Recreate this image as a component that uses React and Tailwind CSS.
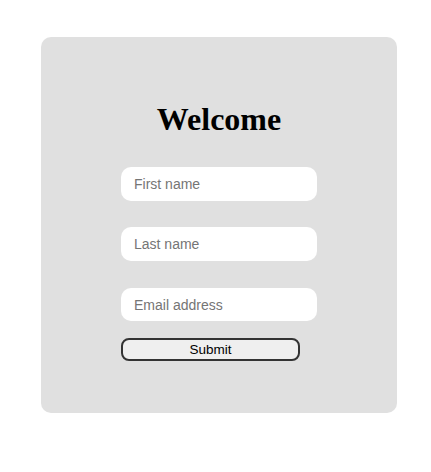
export default function App() {
  return (
    <div className="min-h-[472px] bg-white pt-[37px]">
      <div className="ml-[41px] w-[356px] h-[376px] rounded-[10px] bg-[#e0e0e0] flex flex-col items-center">
        <h1 className="mt-[64px] text-[32px] leading-[37px] font-bold text-black font-['Liberation_Serif',serif]">
          Welcome
        </h1>
        <form className="mt-[29px] flex flex-col items-start" onSubmit={e => e.preventDefault()}>
          <input
            placeholder="First name"
            className="w-[196px] h-[34px] rounded-[10px] bg-white px-[13px] text-[14px] font-['Liberation_Sans',sans-serif] placeholder:text-[#757575] outline-none"
          />
          <input
            placeholder="Last name"
            className="mt-[26px] w-[196px] h-[34px] rounded-[10px] bg-white px-[13px] text-[14px] font-['Liberation_Sans',sans-serif] placeholder:text-[#757575] outline-none"
          />
          <input
            type="email"
            placeholder="Email address"
            className="mt-[27px] w-[196px] h-[33px] rounded-[10px] bg-white px-[13px] text-[14px] font-['Liberation_Sans',sans-serif] placeholder:text-[#757575] outline-none"
          />
          <button
            type="submit"
            className="mt-[17px] w-[179px] h-[23px] rounded-[8px] border-2 border-[#333] bg-[#efefef] text-[13.5px] leading-none text-black font-['Liberation_Sans',sans-serif]"
          >
            Submit
          </button>
        </form>
      </div>
    </div>
  );
}
